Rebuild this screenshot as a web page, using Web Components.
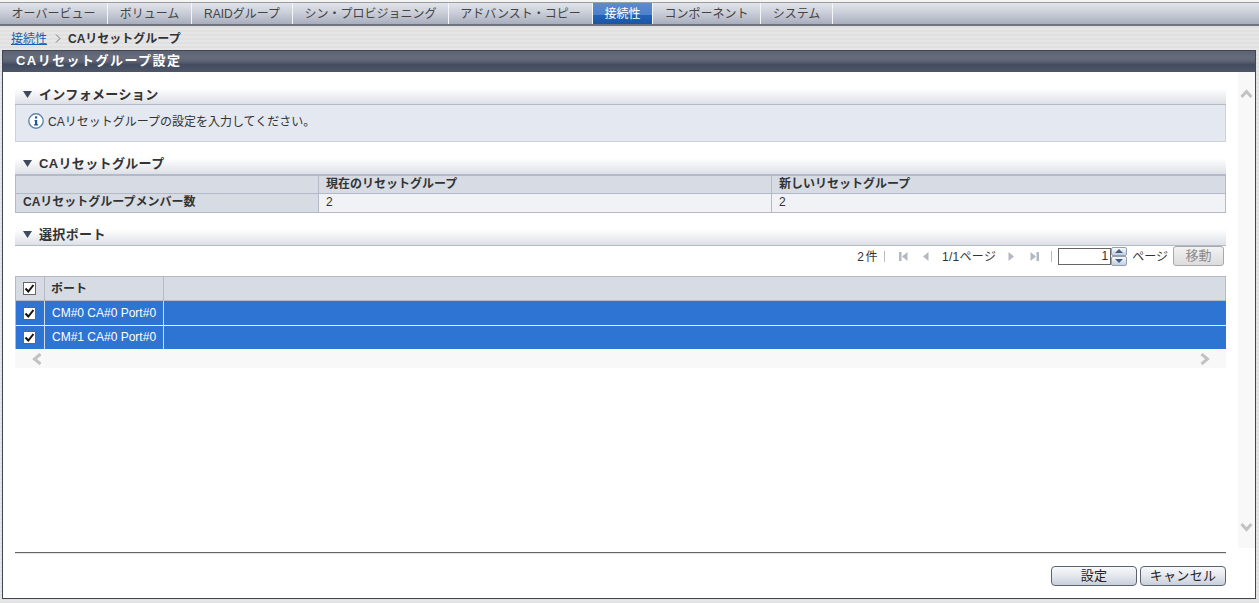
<!DOCTYPE html>
<html lang="ja">
<head>
<meta charset="utf-8">
<title>CAリセットグループ設定</title>
<style>
  html, body { margin: 0; height: 100%; }
  body {
    font: 12px "Liberation Sans", "Noto Sans CJK JP", sans-serif;
    color: #333;
    background: repeating-linear-gradient(#e6e6e6 0 2px, #e0e0e0 2px 4px);
    overflow: hidden;
  }
  #page { display: flex; flex-direction: column; height: 603px; }
</style>
</head>
<body>
<div id="page">
  <fx-tabs>
    <fx-tab style="width:108px">オーバービュー</fx-tab>
    <fx-tab style="width:84px">ボリューム</fx-tab>
    <fx-tab style="width:101px">RAIDグループ</fx-tab>
    <fx-tab style="width:156px">シン・プロビジョニング</fx-tab>
    <fx-tab style="width:144px">アドバンスト・コピー</fx-tab>
    <fx-tab style="width:61px" active>接続性</fx-tab>
    <fx-tab style="width:108px">コンポーネント</fx-tab>
    <fx-tab style="width:72px">システム</fx-tab>
  </fx-tabs>
  <fx-crumb link="接続性">CAリセットグループ</fx-crumb>
  <fx-panel heading="CAリセットグループ設定">
    <fx-section heading="インフォメーション">
      <fx-info>CAリセットグループの設定を入力してください。</fx-info>
    </fx-section>
    <fx-section heading="CAリセットグループ" style="margin-top:11px;--head-pad:2px">
      <fx-compare label="CAリセットグループメンバー数" current="2" next="2"></fx-compare>
    </fx-section>
    <fx-section heading="選択ポート" style="margin-top:11px;--head-pad:2px">
      <fx-pager></fx-pager>
      <fx-ports>
        <fx-port-row>CM#0 CA#0 Port#0</fx-port-row>
        <fx-port-row>CM#1 CA#0 Port#0</fx-port-row>
      </fx-ports>
    </fx-section>
    <fx-button slot="footer">設定</fx-button>
    <fx-button slot="footer">キャンセル</fx-button>
  </fx-panel>
</div>

<script>
function makeShadow(el, html) {
  el.attachShadow({ mode: "open" });
  el.shadowRoot.innerHTML = html;
}

class FxTabs extends HTMLElement {
  constructor() {
    super();
    makeShadow(this, `
      <style>
        :host {
          display: flex;
          box-sizing: border-box;
          height: 26px;
          padding-top: 3px;
          background: linear-gradient(#e9ebf1, #ccd0da 50%, #a9aebe);
          box-shadow: inset 0 2px 0 #f4f4f4, inset 0 3px 0 #9a9ca4;
          border-bottom: 2px solid #70747f;
          flex: none;
        }
      </style>
      <slot></slot>
    `);
  }
}

class FxTab extends HTMLElement {
  constructor() {
    super();
    makeShadow(this, `
      <style>
        :host {
          display: flex;
          box-sizing: border-box;
          align-items: center;
          justify-content: center;
          height: 21px;
          padding-bottom: 2px;
          border-right: 1px solid #f4f5f8;
          color: #444;
          font-size: 12px;
          white-space: nowrap;
        }
        :host([active]) {
          color: #fff;
          background: linear-gradient(#5d8ad0 0, #4f80cb 55%, #2364b8 55%, #1b55a5 100%);
          border-left: 1px solid #f4f5f8;
          margin-left: -1px;
        }
      </style>
      <slot></slot>
    `);
  }
}

class FxCrumb extends HTMLElement {
  constructor() {
    super();
    makeShadow(this, `
      <style>
        :host {
          display: flex;
          align-items: center;
          box-sizing: border-box;
          height: 24px;
          padding: 0 0 1px 11px;
          font-size: 12px;
          flex: none;
        }
        a { color: #1a5fb4; text-decoration: underline; }
        svg { margin: 1px 7px 0 8px; }
        b { color: #333; }
      </style>
      <a href="#">${this.getAttribute("link")}</a>
      <svg width="6" height="9" viewBox="0 0 6 9"><path d="M1 .5 5 4.500 1 8.500" fill="none" stroke="#777"/></svg>
      <b><slot></slot></b>
    `);
  }
}

class FxPanel extends HTMLElement {
  constructor() {
    super();
    makeShadow(this, `
      <style>
        :host {
          display: flex;
          flex-direction: column;
          box-sizing: border-box;
          height: 549px;
          margin: 0 3px 4px 2px;
          background: #fff;
          border: 1px solid #3f4656;
          flex: none;
        }
        header {
          box-sizing: border-box;
          height: 21px;
          padding: 2px 0 0 13px;
          color: #fff;
          font-weight: bold;
          font-size: 13px;
          line-height: 16px;
          letter-spacing: 1.45px;
          background: linear-gradient(#5c6272, #666c7c 30%, #5b6273 50%, #434b5f 65%, #4e5669);
          flex: none;
        }
        .body { display: flex; height: 476px; flex: none; }
        .main { box-sizing: border-box; flex: 1; min-width: 0; padding: 11px 0 0 12px; margin-right: 12px; }
        .rail {
          width: 17px;
          background: #f8f8f8;
          display: flex;
          flex-direction: column;
          justify-content: space-between;
          align-items: center;
          padding: 17px 0 16px;
          box-sizing: border-box;
        }
        .foot {
          flex: 1;
          margin: 4px 29px 0 12px;
          border-top: 1px solid #666;
          box-shadow: inset 0 1px 0 #e4e4e4;
          display: flex;
          justify-content: flex-end;
          gap: 3px;
          padding-top: 13px;
        }
      </style>
      <header>${this.getAttribute("heading")}</header>
      <div class="body">
        <div class="main"><slot></slot></div>
        <div class="rail">
          <svg width="13" height="9" viewBox="0 0 13 9"><path d="M1.500 8 6.500 2.500l5 5.500" fill="none" stroke="#c2c2c2" stroke-width="3"/></svg>
          <svg width="13" height="9" viewBox="0 0 13 9"><path d="M1.500 1 6.500 6.500l5-5.500" fill="none" stroke="#c2c2c2" stroke-width="3"/></svg>
        </div>
      </div>
      <div class="foot"><slot name="footer"></slot></div>
    `);
  }
}

class FxSection extends HTMLElement {
  constructor() {
    super();
    makeShadow(this, `
      <style>
        :host { display: block; }
        h2 {
          display: flex;
          align-items: center;
          box-sizing: border-box;
          height: 22px;
          margin: 0;
          padding: 0 0 var(--head-pad, 0) 8px;
          color: #333;
          font-size: 13px;
          font-weight: bold;
          letter-spacing: .35px;
          background: linear-gradient(#fff, #fff 25%, #dde0e6);
          border-bottom: 1px solid #b3b9c6;
        }
        svg { margin-right: 7px; margin-top: 1px; }
      </style>
      <h2><svg width="9" height="7" viewBox="0 0 9 7"><path d="M0 0h9L4.500 7z" fill="#3f4a5e"/></svg>${this.getAttribute("heading")}</h2>
      <slot></slot>
    `);
  }
}

class FxInfo extends HTMLElement {
  constructor() {
    super();
    makeShadow(this, `
      <style>
        :host {
          display: flex;
          align-items: flex-start;
          box-sizing: border-box;
          height: 37px;
          padding: 8px 0 0 12px;
          background: #e4e8f0;
          border: 1px solid #cdd1d8;
          border-top: 0;
          color: #333;
          font-size: 12px;
          line-height: 16px;
        }
        svg { margin-right: 4px; flex: none; }
        span { padding-top: 1px; }
      </style>
      <svg width="16" height="16" viewBox="0 0 16 16">
        <circle cx="8" cy="8" r="7.200" fill="#fff" stroke="#6484ac" stroke-width="1.400"/>
        <path d="M6.500 7h2.700v4.200h1V12.500H6V11.200h1V8.300h-.5z" fill="#1d5aa0"/>
        <rect x="7" y="3.300" width="2.200" height="2.200" fill="#1d5aa0"/>
      </svg>
      <span><slot></slot></span>
    `);
  }
}

class FxCompare extends HTMLElement {
  constructor() {
    super();
    makeShadow(this, `
      <style>
        :host { display: block; border-top: 1px solid #b3b9c6; }
        .grid {
          display: grid;
          grid-template-columns: 303px 453px 1fr;
          grid-auto-rows: 18px;
          border: 1px solid #b3b9c6;
          border-top: 0;
          font-size: 12px;
          line-height: 17px;
        }
        .grid > div {
          box-sizing: border-box;
          padding-left: 7px;
          border-bottom: 1px solid #b3b9c6;
          border-right: 1px solid #b3b9c6;
        }
        .grid > div:nth-child(3n) { border-right: 0; }
        .grid > div:nth-last-child(-n+3) { border-bottom: 0; }
        .h { background: #d7dbe3; font-weight: bold; color: #333; }
        .v { background: #f1f2f5; color: #333; }
      </style>
      <div class="grid">
        <div class="h"></div>
        <div class="h">現在のリセットグループ</div>
        <div class="h">新しいリセットグループ</div>
        <div class="h">${this.getAttribute("label")}</div>
        <div class="v">${this.getAttribute("current")}</div>
        <div class="v">${this.getAttribute("next")}</div>
      </div>
    `);
  }
}

class FxPager extends HTMLElement {
  constructor() {
    super();
    const edge = (flip) => `<svg class="ic" width="9" height="9" viewBox="0 0 9 9"${flip ? ' style="transform:scaleX(-1)"' : ""}><path d="M0 0h2.500v9H0zM8.500 0v9L3 4.500z" fill="#b4b8bf"/></svg>`;
    const step = (flip) => `<svg class="ic" width="7" height="9" viewBox="0 0 7 9"${flip ? ' style="transform:scaleX(-1)"' : ""}><path d="M6.500 0v9L1 4.500z" fill="#b4b8bf"/></svg>`;
    makeShadow(this, `
      <style>
        :host {
          display: flex;
          justify-content: flex-end;
          align-items: center;
          box-sizing: border-box;
          height: 30px;
          padding: 0 2px 10px 0;
          color: #333;
          font-size: 12px;
          white-space: nowrap;
        }
        .t { padding-bottom: 2px; }
        .bar { width: 1px; height: 11px; background: #b8bcc4; }
        .ic { flex: none; }
        .input {
          box-sizing: border-box;
          width: 53px;
          height: 17px;
          border: 1px solid #666;
          background: #fff;
          text-align: right;
          line-height: 15px;
          padding-right: 2px;
        }
        .spin { display: flex; flex-direction: column; width: 16px; height: 19px; margin-right: 5px; }
        .spin span {
          flex: 1;
          display: flex;
          align-items: center;
          justify-content: center;
          border: 1px solid #8fa0b8;
          border-radius: 2px;
          background: linear-gradient(#fafbfd, #c5cdda);
        }
        .go {
          box-sizing: border-box;
          width: 51px;
          height: 20px;
          margin-left: 5px;
          border: 1px solid #a8a8a8;
          border-radius: 3px;
          background: linear-gradient(#f2f2f2, #dcdcdc);
          color: #8c8c8c;
          font-size: 13px;
          text-align: center;
          line-height: 18px;
        }
      </style>
      <span class="t" style="letter-spacing:1.5px;margin-right:5px">2件</span>
      <span class="bar" style="margin-right:14px"></span>
      ${edge(false)}<span style="width:14px"></span>${step(false)}
      <span class="t" style="margin:0 12px 0 13px;letter-spacing:.3px">1/1ページ</span>
      ${step(true)}<span style="width:15px"></span>${edge(true)}
      <span class="bar" style="margin:0 6px 0 12px"></span>
      <span class="input">1</span>
      <span class="spin">
        <span><svg width="8" height="4" viewBox="0 0 8 4"><path d="M0 4 4 0l4 4z" fill="#3f5f88"/></svg></span>
        <span><svg width="8" height="4" viewBox="0 0 8 4"><path d="M0 0l4 4 4-4z" fill="#3f5f88"/></svg></span>
      </span>
      <span class="t">ページ</span>
      <span class="go">移動</span>
    `);
  }
}

const CHECK = `<svg width="13" height="13" viewBox="0 0 13 13" style="display:block">
  <rect x=".5" y=".5" width="12" height="12" fill="#fff" stroke="#666"/>
  <path d="M2.500 6.500 5.300 9.500 10.500 3" fill="none" stroke="#111" stroke-width="2"/>
</svg>`;

class FxPorts extends HTMLElement {
  constructor() {
    super();
    makeShadow(this, `
      <style>
        :host { display: block; }
        .head {
          display: grid;
          grid-template-columns: 29px 119px 1fr;
          box-sizing: border-box;
          height: 25px;
          background: #d7dbe3;
          border: 1px solid #b3b9c6;
          font-weight: bold;
          color: #333;
          font-size: 12px;
          line-height: 24px;
        }
        .head > div { border-right: 1px solid #b3b9c6; box-sizing: border-box; height: 23px; }
        .head > div:last-child { border-right: 0; }
        .chk { display: flex; align-items: center; justify-content: center; padding-right: 1px; }
        .name { padding-left: 6px; }
        .sb {
          display: flex;
          justify-content: space-between;
          align-items: center;
          height: 19px;
          padding: 0 16px 0 17px;
          background: #f8f8f8;
        }
      </style>
      <div class="head">
        <div class="chk">${CHECK}</div>
        <div class="name">ポート</div>
        <div></div>
      </div>
      <slot></slot>
      <div class="sb">
        <svg width="10" height="12" viewBox="0 0 10 12"><path d="M8.500 1 2.500 6l6 5" fill="none" stroke="#c2c2c2" stroke-width="3"/></svg>
        <svg width="10" height="12" viewBox="0 0 10 12"><path d="M1.500 1l6 5-6 5" fill="none" stroke="#c2c2c2" stroke-width="3"/></svg>
      </div>
    `);
  }
}

class FxPortRow extends HTMLElement {
  constructor() {
    super();
    makeShadow(this, `
      <style>
        :host {
          display: grid;
          grid-template-columns: 29px 119px 1fr;
          box-sizing: border-box;
          height: 25px;
          background: #2e74d2;
          border-left: 1px solid #b3b9c6;
          border-bottom: 1px solid #e8eef8;
          color: #fff;
          font-size: 12px;
          line-height: 24px;
        }
        :host(:last-child) { height: 23px; line-height: 23px; border-bottom: 0; }
        div { box-sizing: border-box; border-right: 1px solid #cfdcf0; }
        div:last-child { border-right: 0; }
        .chk { display: flex; align-items: center; justify-content: center; padding-right: 1px; }
        .name { padding-left: 7px; white-space: nowrap; }
      </style>
      <div class="chk">${CHECK}</div>
      <div class="name"><slot></slot></div>
      <div></div>
    `);
  }
}

class FxButton extends HTMLElement {
  constructor() {
    super();
    makeShadow(this, `
      <style>
        :host {
          display: block;
          box-sizing: border-box;
          width: 86px;
          height: 20px;
          border: 1px solid #5a6273;
          border-radius: 4px;
          background: linear-gradient(#f8f9fb, #e4e7ed 50%, #c9cfdb);
          color: #222;
          font-size: 13px;
          letter-spacing: .3px;
          line-height: 18px;
          text-align: center;
        }
      </style>
      <slot></slot>
    `);
  }
}

customElements.define("fx-tabs", FxTabs);
customElements.define("fx-tab", FxTab);
customElements.define("fx-crumb", FxCrumb);
customElements.define("fx-panel", FxPanel);
customElements.define("fx-section", FxSection);
customElements.define("fx-info", FxInfo);
customElements.define("fx-compare", FxCompare);
customElements.define("fx-pager", FxPager);
customElements.define("fx-ports", FxPorts);
customElements.define("fx-port-row", FxPortRow);
customElements.define("fx-button", FxButton);
</script>
</body>
</html>
